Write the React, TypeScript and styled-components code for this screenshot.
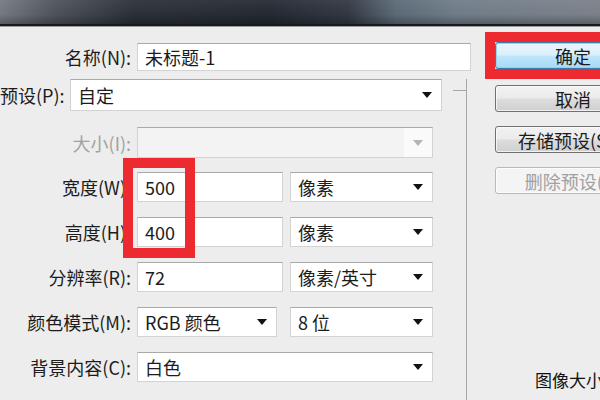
import styled, { createGlobalStyle } from 'styled-components';

const GlobalStyle = createGlobalStyle`
  html, body {
    margin: 0;
    padding: 0;
    background: #ededed;
  }
  body {
    font-family: "Noto Sans CJK SC", "Noto Sans", sans-serif;
  }
`;

const Dialog = styled.div`
  position: relative;
  width: 600px;
  height: 400px;
  overflow: hidden;
  background: #ededed;
  color: #1c1c1c;
  font-size: 18px;
`;

const TitleBar = styled.div`
  height: 24px;
  background:
    linear-gradient(180deg, rgba(255, 255, 255, 0.06) 0%, rgba(0, 0, 0, 0) 60%, rgba(0, 0, 0, 0.25) 100%),
    linear-gradient(90deg, #757980 0%, #4e535b 9%, #2b3039 22%, #242932 45%, #323842 58%, #5b6976 66%, #6f7c88 76%, #7b8088 100%);
  border-bottom: 2px solid #16191e;
  box-shadow: 0 1px 0 #9a9a9a;
`;

const Main = styled.div`
  display: flex;
  height: 374px;
`;

const FormCol = styled.div`
  width: 467px;
  display: flex;
  flex-direction: column;
  padding-top: 17px;
`;

const Group = styled.div`
  position: relative;
  flex: 1;
  margin-top: 8px;
  border-right: 1px solid #a6a6a6;

  &::before {
    content: '';
    position: absolute;
    top: 11px;
    right: 0;
    width: 13px;
    border-top: 1px solid #a6a6a6;
  }
`;

const Row = styled.div<{ $mt?: number; $h?: number }>`
  display: flex;
  align-items: center;
  height: ${(p) => p.$h ?? 30}px;
  margin-top: ${(p) => p.$mt ?? 15}px;
`;

const Label = styled.div<{ $w?: number; $gap?: number; $disabled?: boolean }>`
  width: ${(p) => p.$w ?? 131}px;
  flex: none;
  text-align: right;
  white-space: nowrap;
  color: ${(p) => (p.$disabled ? '#a2a2a2' : '#1c1c1c')};
  margin-right: ${(p) => p.$gap ?? 6}px;
`;

const Field = styled.div<{ $w: number; $ml?: number }>`
  box-sizing: border-box;
  width: ${(p) => p.$w}px;
  height: 100%;
  margin-left: ${(p) => p.$ml ?? 0}px;
  flex: none;
  display: flex;
  align-items: center;
  padding-left: 7px;
  background: #fff;
  border: 1px solid #d3d3d3;
  border-top-color: #a9a9a9;
  font-size: 18px;
  white-space: nowrap;
  overflow: hidden;
`;

const SelectBox = styled(Field)<{ $disabled?: boolean }>`
  justify-content: space-between;
  padding-right: 0;
  background: ${(p) => (p.$disabled ? '#f3f3f3' : '#fff')};
`;

const ArrowCell = styled.div<{ $disabled?: boolean }>`
  width: 28px;
  height: 100%;
  flex: none;
  display: flex;
  align-items: center;
  justify-content: center;
  background: ${(p) => (p.$disabled ? '#fafafa' : 'transparent')};

  &::after {
    content: '';
    border-left: 5px solid transparent;
    border-right: 5px solid transparent;
    border-top: 6px solid ${(p) => (p.$disabled ? '#b4b4b4' : '#111')};
  }
`;

const Select = ({ w, ml, disabled, children }: { w: number; ml?: number; disabled?: boolean; children?: React.ReactNode }) => (
  <SelectBox $w={w} $ml={ml} $disabled={disabled}>
    <span>{children}</span>
    <ArrowCell $disabled={disabled} />
  </SelectBox>
);

const ButtonCol = styled.div`
  display: flex;
  flex-direction: column;
  padding-left: 28px;
  padding-top: 16px;
`;

const Button = styled.div<{ $primary?: boolean; $disabled?: boolean; $mt?: number }>`
  box-sizing: border-box;
  width: 156px;
  height: 27px;
  margin-top: ${(p) => p.$mt ?? 0}px;
  display: flex;
  align-items: center;
  justify-content: center;
  border-radius: 3px;
  font-size: 18px;
  white-space: nowrap;
  color: ${(p) => (p.$disabled ? '#a0a0a0' : '#1c1c1c')};
  border: 1px solid ${(p) => (p.$primary ? '#3d7bad' : p.$disabled ? '#b9b9b9' : '#707070')};
  background: ${(p) =>
    p.$primary
      ? 'linear-gradient(180deg, #eaf6fd 0%, #d9f0fc 48%, #bee6fd 52%, #a7d9f5 100%)'
      : p.$disabled
      ? '#f4f4f4'
      : 'linear-gradient(180deg, #f2f2f2 0%, #ebebeb 48%, #dddddd 52%, #cfcfcf 100%)'};
  box-shadow: ${(p) => (p.$primary ? 'inset 0 0 0 1px #8fd3f5' : 'inset 0 0 0 1px rgba(255,255,255,0.7)')};
`;

const Caption = styled.div`
  margin-top: auto;
  margin-bottom: 8px;
  padding-left: 40px;
  font-size: 17px;
  white-space: nowrap;
  color: #111;
`;

const Highlight = styled.div<{ $x: number; $y: number; $w: number; $h: number }>`
  position: absolute;
  left: ${(p) => p.$x}px;
  top: ${(p) => p.$y}px;
  width: ${(p) => p.$w}px;
  height: ${(p) => p.$h}px;
  box-sizing: border-box;
  border: 10px solid #ec2a30;
  pointer-events: none;
`;

export default function App() {
  return (
    <>
      <GlobalStyle />
      <Dialog>
        <TitleBar />
        <Main>
          <FormCol>
            <Row $mt={0} $h={28}>
              <Label>名称(N):</Label>
              <Field $w={334}>未标题-1</Field>
            </Row>
            <Group>
              <Row $mt={0} $h={32}>
                <Label $w={63} $gap={7}>预设(P):</Label>
                <Select w={372}>自定</Select>
              </Row>
              <Row $mt={16} $h={31}>
                <Label $disabled>大小(I):</Label>
                <Select w={296} disabled />
              </Row>
              <Row $mt={14}>
                <Label>宽度(W):</Label>
                <Field $w={146}>500</Field>
                <Select w={143} ml={7}>像素</Select>
              </Row>
              <Row>
                <Label>高度(H):</Label>
                <Field $w={146}>400</Field>
                <Select w={143} ml={7}>像素</Select>
              </Row>
              <Row>
                <Label>分辨率(R):</Label>
                <Field $w={146}>72</Field>
                <Select w={143} ml={7}>像素/英寸</Select>
              </Row>
              <Row>
                <Label>颜色模式(M):</Label>
                <Select w={140}>RGB 颜色</Select>
                <Select w={143} ml={13}>8 位</Select>
              </Row>
              <Row>
                <Label>背景内容(C):</Label>
                <Select w={296}>白色</Select>
              </Row>
            </Group>
          </FormCol>
          <ButtonCol>
            <Button $primary>确定</Button>
            <Button $mt={16}>取消</Button>
            <Button $mt={14}>存储预设(S)...</Button>
            <Button $mt={14} $disabled>删除预设(D)</Button>
            <Caption>图像大小:</Caption>
          </ButtonCol>
        </Main>
        <Highlight $x={485} $y={32} $w={140} $h={47} />
        <Highlight $x={123} $y={158} $w={72} $h={100} />
      </Dialog>
    </>
  );
}
